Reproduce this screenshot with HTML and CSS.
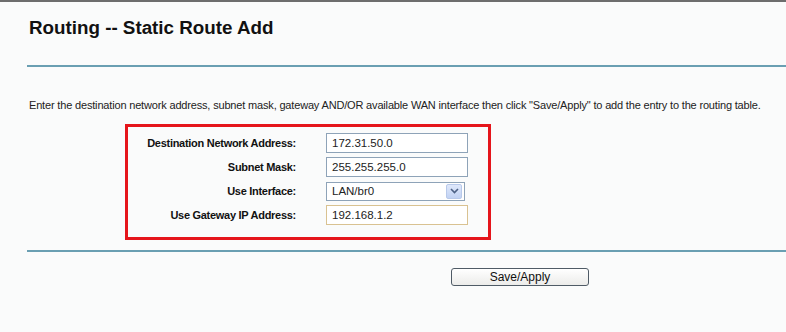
FILE: index.html
```html
<!DOCTYPE html>
<html>
<head>
<meta charset="utf-8">
<link rel="stylesheet" href="styles.css">
<title>Routing -- Static Route Add</title>
</head>
<body>
<div class="topbar"></div>
<div class="page">
  <h1 class="title">Routing -- Static Route Add</h1>
  <div class="rule"></div>
  <p class="intro">Enter the destination network address, subnet mask, gateway AND/OR available WAN interface then click "Save/Apply" to add the entry to the routing table.</p>

  <div class="formbox">
    <div class="form">
      <label class="lbl">Destination Network Address:</label>
      <div class="field">172.31.50.0</div>

      <label class="lbl">Subnet Mask:</label>
      <div class="field">255.255.255.0</div>

      <label class="lbl">Use Interface:</label>
      <div class="field select">
        <span>LAN/br0</span>
        <span class="arrow">
          <svg width="9" height="6" viewBox="0 0 9 6"><path d="M1 1 L4.5 4.5 L8 1" fill="none" stroke="#4d6185" stroke-width="1.6"/></svg>
        </span>
      </div>

      <label class="lbl">Use Gateway IP Address:</label>
      <div class="field focus">192.168.1.2</div>
    </div>
  </div>

  <div class="rule rule-bottom"></div>

  <div class="actions">
    <button class="btn">Save/Apply</button>
  </div>
</div>
</body>
</html>
```

FILE: styles.css
```css
html, body { margin: 0; padding: 0; }

body {
  background: #fafbfb;
  color: #000;
  font-family: "Liberation Sans", Arial, sans-serif;
  width: 786px;
  height: 332px;
  overflow: hidden;
}

.topbar {
  height: 2px;
  background: #6d6d6d;
}

.page {
  padding-left: 27px;
}

.title {
  margin: 15px 0 0 2px;
  font-size: 18.8px;
  line-height: 22px;
  font-weight: bold;
  color: #111;
}

.rule {
  margin-top: 26px;
  height: 2px;
  background: #6a9fb2;
}

.intro {
  margin: 31px 0 0 2px;
  font-size: 11px;
  line-height: 14px;
  color: #222;
  letter-spacing: -0.17px;
  white-space: nowrap;
}

.formbox {
  margin: 12px 0 0 98px;
  width: 360px;
  height: 110px;
  border: 3px solid #e5151b;
}

.form {
  display: grid;
  grid-template-columns: 168px 142px;
  grid-auto-rows: 24px;
  column-gap: 30px;
  align-items: center;
  padding-top: 4px;
}

.lbl {
  text-align: right;
  font-size: 11px;
  font-weight: bold;
  letter-spacing: -0.28px;
  color: #111;
}

.field {
  height: 20px;
  box-sizing: border-box;
  border: 1px solid #8ea3b8;
  background: #fff;
  font-size: 11.5px;
  line-height: 18px;
  padding-left: 5px;
  color: #222;
}

.field.focus {
  border-color: #d9c291;
}

.select {
  height: 19px;
  width: 139px;
  display: flex;
  justify-content: space-between;
  align-items: center;
  line-height: 17px;
  padding-right: 2px;
}

.arrow {
  width: 16px;
  height: 15px;
  display: flex;
  align-items: center;
  justify-content: center;
  background: linear-gradient(#dfe8fb, #c1d2f3);
  border: 1px solid #b8c9ea;
  box-sizing: border-box;
  border-radius: 2px;
}

.rule-bottom {
  margin-top: 10px;
}

.actions {
  padding: 15px 0 0 424px;
}

.btn {
  width: 138px;
  height: 18px;
  margin: 0;
  padding: 0;
  border: 1px solid #4f5b66;
  border-radius: 3px;
  background: linear-gradient(#ffffff, #ececea);
  font-family: "Liberation Sans", Arial, sans-serif;
  font-size: 12px;
  line-height: 16px;
  color: #111;
}
```
